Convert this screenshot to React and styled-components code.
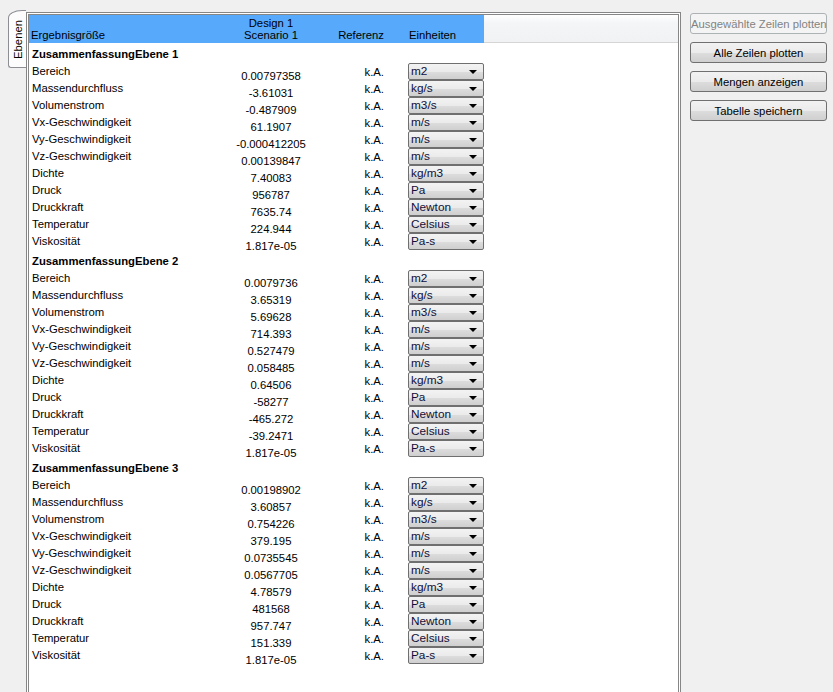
import React from "react";
import styled, { createGlobalStyle } from "styled-components";

const labels = [
  "Bereich",
  "Massendurchfluss",
  "Volumenstrom",
  "Vx-Geschwindigkeit",
  "Vy-Geschwindigkeit",
  "Vz-Geschwindigkeit",
  "Dichte",
  "Druck",
  "Druckkraft",
  "Temperatur",
  "Viskosität",
];
const units = ["m2", "kg/s", "m3/s", "m/s", "m/s", "m/s", "kg/m3", "Pa", "Newton", "Celsius", "Pa-s"];

const sections = [
  {
    name: "ZusammenfassungEbene 1",
    values: ["0.00797358", "-3.61031", "-0.487909", "61.1907", "-0.000412205", "0.00139847", "7.40083", "956787", "7635.74", "224.944", "1.817e-05"],
  },
  {
    name: "ZusammenfassungEbene 2",
    values: ["0.0079736", "3.65319", "5.69628", "714.393", "0.527479", "0.058485", "0.64506", "-58277", "-465.272", "-39.2471", "1.817e-05"],
  },
  {
    name: "ZusammenfassungEbene 3",
    values: ["0.00198902", "3.60857", "0.754226", "379.195", "0.0735545", "0.0567705", "4.78579", "481568", "957.747", "151.339", "1.817e-05"],
  },
];

const GlobalStyle = createGlobalStyle`
  html, body {
    margin: 0;
    padding: 0;
    background: #f0f0f0;
    overflow: hidden;
  }
  body {
    font-family: "Liberation Sans", Arial, sans-serif;
    font-size: 11.3px;
    color: #000;
  }
`;

const Page = styled.div`
  display: flex;
  align-items: flex-start;
  padding-top: 10px;
  height: 682px;
`;

const TabStrip = styled.div`
  width: 18px;
  padding-left: 8px;
`;

const Tab = styled.div`
  height: 58px;
  box-sizing: border-box;
  border: 1px solid #8c8e94;
  border-right: none;
  border-top-left-radius: 14px 8px;
  border-bottom-left-radius: 3px;
  background: #fcfcfc;
  display: flex;
  align-items: center;
  justify-content: center;
  span {
    writing-mode: vertical-rl;
    transform: rotate(180deg);
    line-height: 14px;
  }
`;

const Frame = styled.div`
  margin-top: 2px;
  width: 655px;
  height: 700px;
  box-sizing: border-box;
  border: 3px double #868686;
  background: #fff;
  overflow: hidden;
`;

const HeaderRow = styled.div`
  display: flex;
  height: 28px;
`;

const HeaderBlue = styled.div`
  display: grid;
  grid-template-columns: 196px 92px 91px 76px;
  background: #56a9fb;
  align-items: end;
  padding-bottom: 2px;
  box-sizing: border-box;
`;

const HeaderFill = styled.div`
  flex: 1;
  background: linear-gradient(#ffffff 0%, #f4f5f7 30%, #f1f2f4 100%);
  border-bottom: 1px solid #d5d5d5;
`;

const HCell = styled.div`
  line-height: 12px;
  text-align: ${(p) => p.$align || "left"};
  padding-left: ${(p) => p.$pl || 0}px;
  padding-right: ${(p) => p.$pr || 0}px;
`;

const Body = styled.div`
  padding-top: 3px;
`;

const Section = styled.div`
  margin-bottom: 3px;
`;

const SectionTitle = styled.div`
  font-weight: bold;
  line-height: 17px;
  padding-left: 3px;
`;

const Row = styled.div`
  display: grid;
  grid-template-columns: 196px 92px 91px 76px;
  height: 17px;
  line-height: 17px;
`;

const Label = styled.div`
  padding-left: 3px;
  white-space: nowrap;
`;

const Value = styled.div`
  text-align: center;
  padding-top: 5px;
  white-space: nowrap;
`;

const Ref = styled.div`
  text-align: right;
  padding-right: 24px;
  padding-top: 1px;
`;

const Select = styled.div`
  height: 17px;
  box-sizing: border-box;
  border: 1px solid #6f6f6f;
  border-radius: 2px;
  background: linear-gradient(#f3f3f3 0%, #ebebeb 50%, #dddddd 51%, #cfcfcf 100%);
  display: flex;
  align-items: center;
  justify-content: space-between;
  padding: 0 6px 0 2px;
  color: #10103a;
  font-size: 11.8px;
  line-height: 15px;
`;

const Arrow = styled.span`
  width: 0;
  height: 0;
  border-left: 4px solid transparent;
  border-right: 4px solid transparent;
  border-top: 4px solid #000;
`;

const Sidebar = styled.div`
  margin-left: 9px;
  padding-top: 3px;
  width: 137px;
  display: flex;
  flex-direction: column;
  gap: 8px;
`;

const Button = styled.button`
  height: 21px;
  font-family: inherit;
  font-size: 11.3px;
  padding: 0;
  border-radius: 3px;
  border: 1px solid ${(p) => (p.disabled ? "#adb2b5" : "#707070")};
  color: ${(p) => (p.disabled ? "#838383" : "#000")};
  background: ${(p) =>
    p.disabled
      ? "#f4f4f4"
      : "linear-gradient(#f2f2f2 0%, #ebebeb 50%, #dddddd 51%, #cfcfcf 100%)"};
  white-space: nowrap;
`;

export default function App() {
  return (
    <>
      <GlobalStyle />
      <Page>
        <TabStrip>
          <Tab>
            <span>Ebenen</span>
          </Tab>
        </TabStrip>
        <Frame>
          <HeaderRow>
            <HeaderBlue>
              <HCell $pl={2}>Ergebnisgröße</HCell>
              <HCell $align="center">
                Design 1
                <br />
                Scenario 1
              </HCell>
              <HCell $align="right" $pr={24}>Referenz</HCell>
              <HCell $pl={1}>Einheiten</HCell>
            </HeaderBlue>
            <HeaderFill />
          </HeaderRow>
          <Body>
            {sections.map((s) => (
              <Section key={s.name}>
                <SectionTitle>{s.name}</SectionTitle>
                {labels.map((l, i) => (
                  <Row key={l}>
                    <Label>{l}</Label>
                    <Value>{s.values[i]}</Value>
                    <Ref>k.A.</Ref>
                    <Select>
                      <span>{units[i]}</span>
                      <Arrow />
                    </Select>
                  </Row>
                ))}
              </Section>
            ))}
          </Body>
        </Frame>
        <Sidebar>
          <Button disabled>Ausgewählte Zeilen plotten</Button>
          <Button>Alle Zeilen plotten</Button>
          <Button>Mengen anzeigen</Button>
          <Button>Tabelle speichern</Button>
        </Sidebar>
      </Page>
    </>
  );
}
